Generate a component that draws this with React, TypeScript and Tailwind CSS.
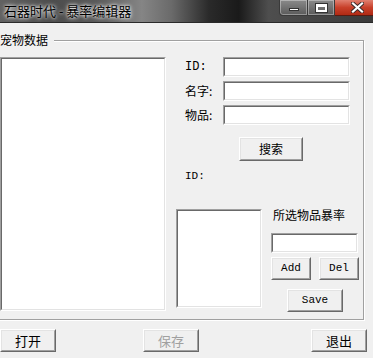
import type { ReactNode } from "react";

const cjk = "font-['Noto_Sans_CJK_SC',sans-serif]";
const mono = "font-['Liberation_Mono','Noto_Sans_CJK_SC',monospace]";

function Sunken({ className = "" }: { className?: string }) {
  return (
    <div className={`border border-t-[#a0a0a0] border-l-[#a0a0a0] border-r-white border-b-white ${className}`}>
      <div className="h-full w-full border border-t-[#696969] border-l-[#696969] border-r-[#e3e3e3] border-b-[#e3e3e3] bg-white" />
    </div>
  );
}

function Button({ className = "", children, disabled }: { className?: string; children: ReactNode; disabled?: boolean }) {
  return (
    <div className={`shrink-0 border border-t-white border-l-white border-r-[#696969] border-b-[#696969] bg-[#f0f0f0] ${className}`}>
      <div
        className={`flex h-full w-full items-center justify-center border border-t-[#e3e3e3] border-l-[#e3e3e3] border-r-[#a0a0a0] border-b-[#a0a0a0] ${
          disabled ? "text-[#a0a0a0]" : "text-black"
        }`}
      >
        {children}
      </div>
    </div>
  );
}

function TitleBar() {
  return (
    <div className="flex h-[23px] shrink-0 justify-between border-b border-[#2a2a2a] bg-[linear-gradient(90deg,#626262_0%,#4c4c4c_14%,#5a5a5a_26%,#858585_38%,#6a6a6a_46%,#2a2a2a_56%,#1a1a1a_64%,#4e4e4e_72%,#3a3a3a_100%)]">
      <div
        className={`pl-[4px] pt-[2px] text-[13px] leading-[18px] text-black [text-shadow:0_0_5px_#ffffff,0_0_3px_#ffffff] ${cjk}`}
      >
        石器时代 - 暴率编辑器
      </div>
      <div className="flex h-[16px]">
        <div className="flex w-[29px] items-center justify-center rounded-bl-[4px] border border-t-0 border-[#3a3a3a] bg-[linear-gradient(180deg,#8a8a8a,#5a5a5a)] shadow-[inset_0_0_0_1px_rgba(255,255,255,0.35)]">
          <div className="mt-[4px] h-[3px] w-[10px] border border-[#333] bg-white" />
        </div>
        <div className="flex w-[27px] items-center justify-center border border-l-0 border-t-0 border-[#3a3a3a] bg-[linear-gradient(180deg,#8a8a8a,#5a5a5a)] shadow-[inset_0_0_0_1px_rgba(255,255,255,0.35)]">
          <div className="h-[8px] w-[11px] border-2 border-t-[3px] border-white outline outline-1 outline-[#333]" />
        </div>
        <div className="flex w-[38px] items-center border border-l-0 border-r-0 border-t-0 border-[#5a1a10] bg-[linear-gradient(180deg,#e08070,#c8402a_50%,#b02a14)] pl-[16px]">
          <svg width="13" height="11" viewBox="0 0 13 11">
            <path d="M2 1.5 L11 9.5 M11 1.5 L2 9.5" stroke="#3a2a2a" strokeWidth="4" strokeLinecap="square" />
            <path d="M2 1.5 L11 9.5 M11 1.5 L2 9.5" stroke="#ffffff" strokeWidth="2.2" strokeLinecap="square" />
          </svg>
        </div>
      </div>
    </div>
  );
}

export default function App() {
  return (
    <div className="flex h-[358px] w-[373px] flex-col overflow-hidden bg-[#f0f0f0] text-[12px] text-black">
      <TitleBar />

      {/* group box */}
      <div className="relative ml-[-8px] mt-[17px] h-[280px] w-[372px] shrink-0 border border-[#a0a0a0] shadow-[inset_1px_1px_0_#ffffff,1px_1px_0_#ffffff]">
        <div className={`absolute left-[7px] top-[-8px] w-[54px] bg-[#f0f0f0] text-[12px] leading-[14px] ${cjk}`}>宠物数据</div>

        <div className="flex items-start pl-[7px] pt-[16px]">
          <Sunken className="h-[254px] w-[166px] shrink-0" />

          <div className="ml-[10px] flex w-[183px] flex-col">
            {["ID:", "名字:", "物品:"].map((label, i) => (
              <div key={label} className={`flex h-[20px] items-center ${i > 0 ? "mt-[4px]" : ""}`}>
                <div className={`w-[47px] pl-[9px] text-[12px] leading-none ${label === "ID:" ? `${mono} text-[11px]` : cjk}`}>
                  {label}
                </div>
                <Sunken className="h-[20px] w-[127px]" />
              </div>
            ))}

            <Button className={`ml-[63px] mt-[12px] h-[24px] w-[64px] text-[12px] ${cjk}`}>搜索</Button>

            <div className={`ml-[9px] mt-[7px] h-[16px] text-[11px] leading-[16px] ${mono}`}>ID:</div>

            <div className="mt-[25px] flex items-start">
              <Sunken className="h-[99px] w-[86px] shrink-0" />
              <div className="ml-[9px] flex flex-col">
                <div className={`ml-[2px] h-[12px] text-[12px] leading-[12px] ${cjk}`}>所选物品暴率</div>
                <Sunken className="mt-[12px] h-[20px] w-[87px]" />
                <div className={`mt-[4px] flex gap-[8px] text-[11px] ${mono}`}>
                  <Button className="h-[23px] w-[40px]">Add</Button>
                  <Button className="h-[23px] w-[40px]">Del</Button>
                </div>
                <Button className={`ml-[16px] mt-[9px] h-[23px] w-[56px] text-[11px] ${mono}`}>Save</Button>
              </div>
            </div>
          </div>
        </div>
      </div>

      {/* bottom buttons */}
      <div className={`mt-[9px] flex text-[13px] ${cjk}`}>
        <Button className="h-[23px] w-[56px]">打开</Button>
        <Button className="ml-[87px] h-[23px] w-[56px]" disabled>
          保存
        </Button>
        <Button className="ml-[112px] h-[23px] w-[56px]">退出</Button>
      </div>
    </div>
  );
}
